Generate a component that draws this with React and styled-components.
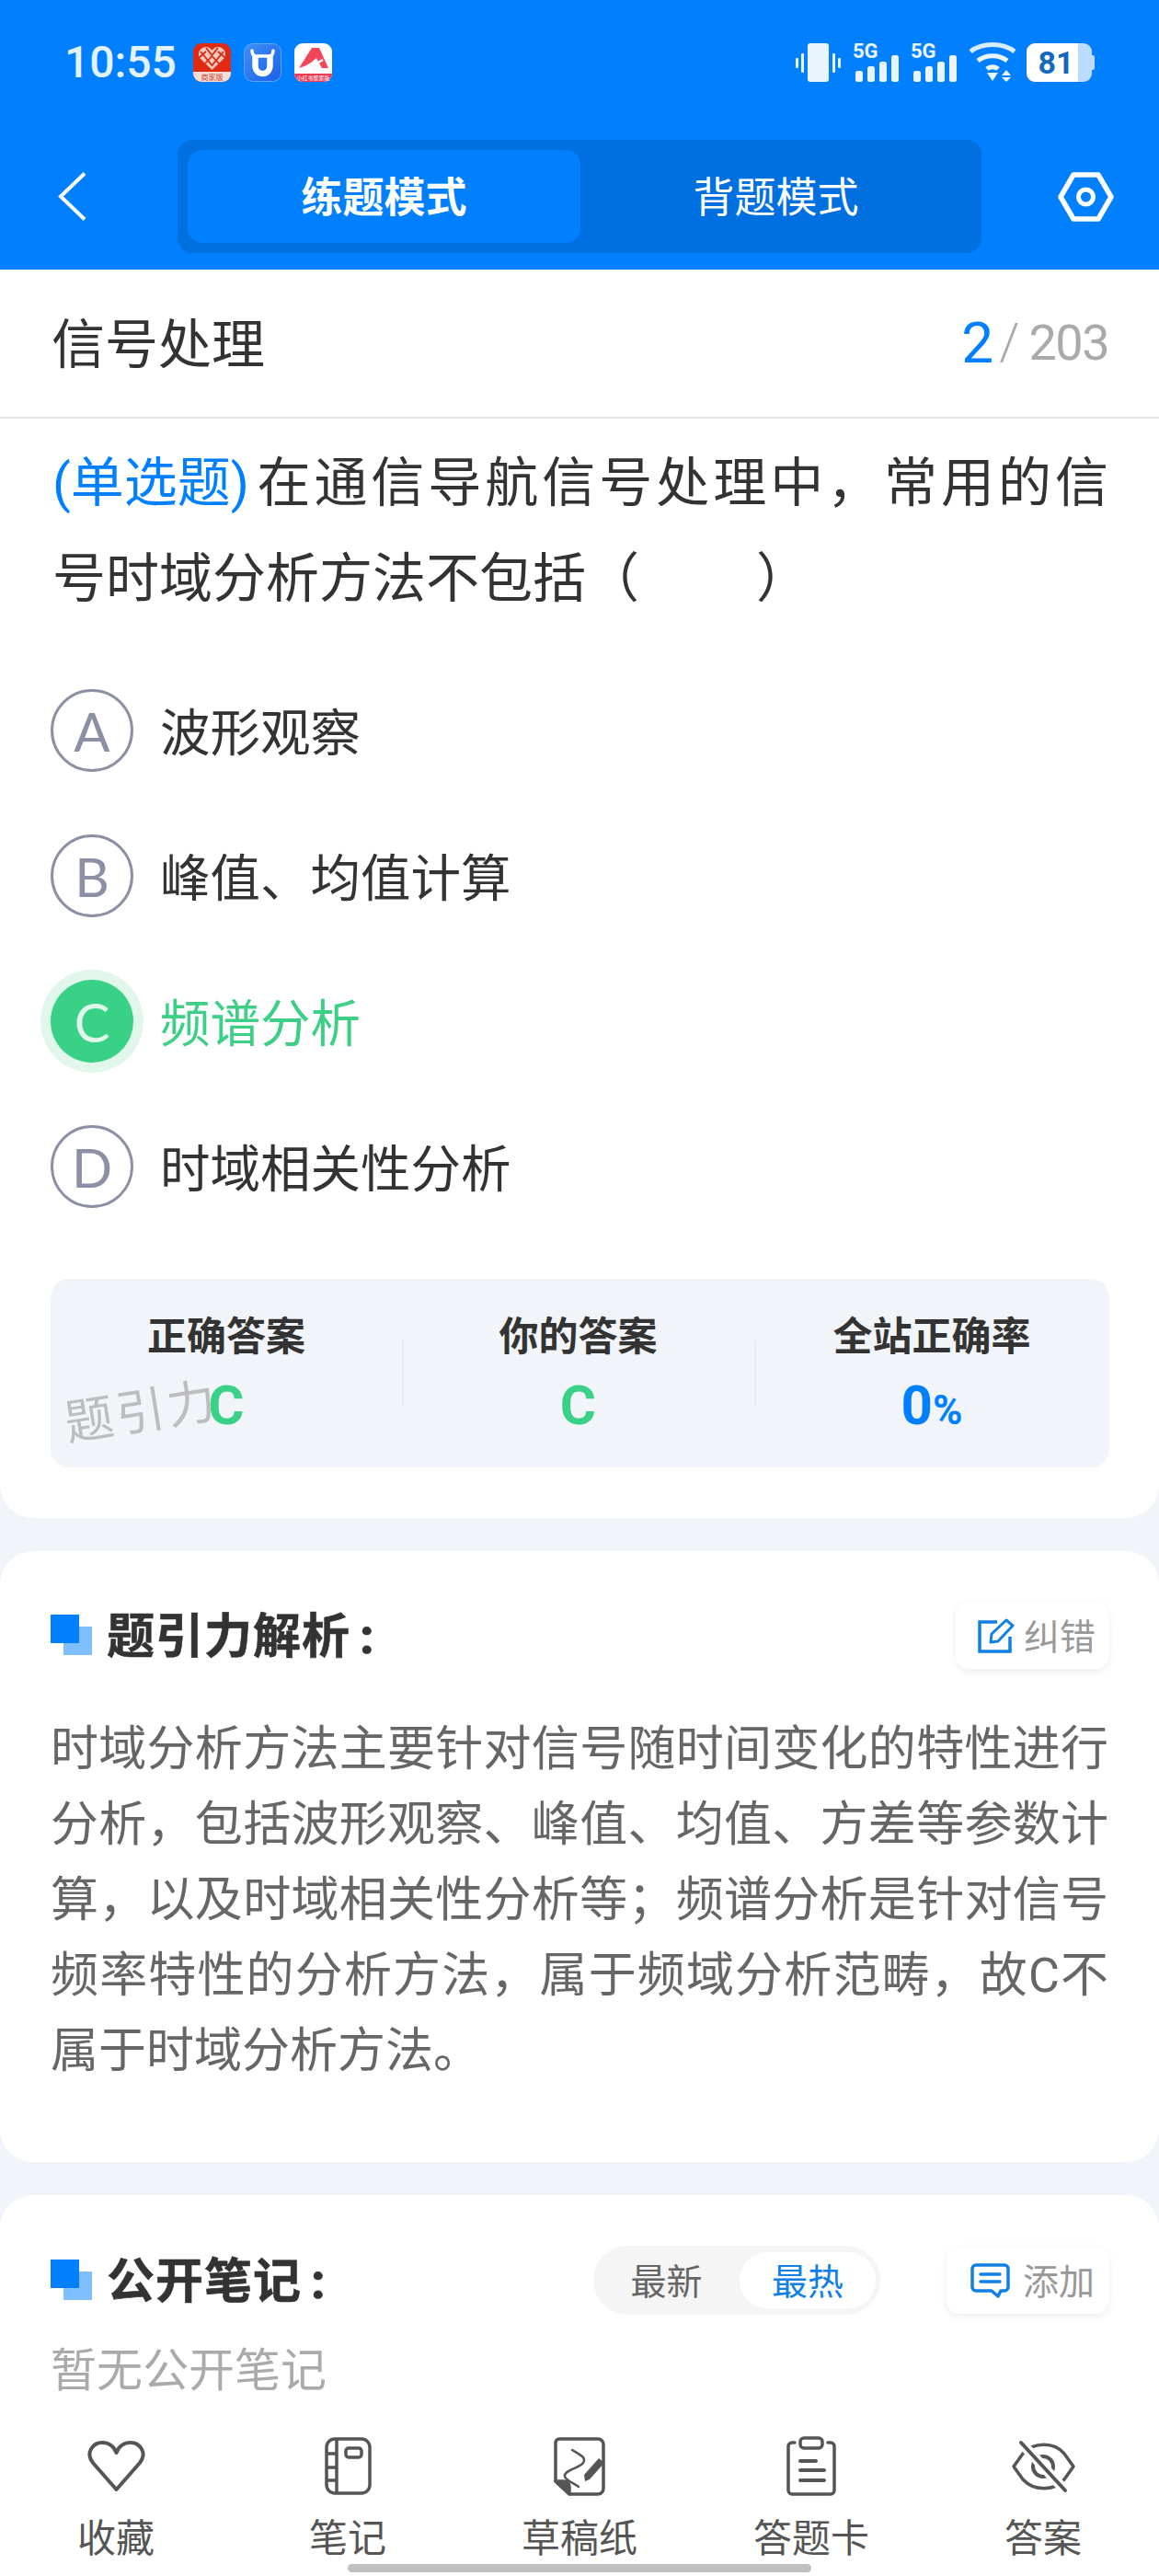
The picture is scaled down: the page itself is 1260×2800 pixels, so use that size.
import React from 'react'
import styled, { createGlobalStyle } from 'styled-components'

const GlobalStyle = createGlobalStyle`
  html, body {
    margin: 0;
    padding: 0;
    background: #F1F5F9;
  }
  * {
    box-sizing: border-box;
  }
  svg {
    overflow: visible;
  }
`

const FONT = `Roboto, "Noto Sans CJK SC", sans-serif`

function HeartLattice() {
  return (
    <svg width="41" height="42" viewBox="0 0 41 42">
      <rect width="41" height="42" rx="9" fill="#E02A12" />
      <path d="M0 31h41v2a9 9 0 0 1-9 9H9a9 9 0 0 1-9-9z" fill="#F8DCD6" />
      <path d="M20.5 29 L7 16 C3.500 9 9 4 14 4 C17 4 19.500 6 20.500 8 C21.500 6 24 4 27 4 C32 4 37.500 9 34 16 Z" fill="#F7C9BC" />
      <path d="M8 9 L20.500 24 L33 9 M14 5 L20.500 13 L27 5 M6 16 L14 9 M35 16 L27 9 M13 22 L20.500 14 L28 22" stroke="#D92A12" strokeWidth="1.800" fill="none" />
      <text x="20.500" y="39.500" fontSize="8" textAnchor="middle" fill="#C9402C" fontFamily={FONT}>商家版</text>
    </svg>
  )
}

function CowBadge() {
  return (
    <svg width="41" height="42" viewBox="0 0 41 42">
      <defs>
        <linearGradient id="cowFill" x1="0" y1="0" x2="1" y2="1">
          <stop offset="0" stopColor="#3F8FF8" />
          <stop offset="1" stopColor="#1C5FE6" />
        </linearGradient>
      </defs>
      <rect x="0.500" y="0.500" width="40" height="41" rx="9" fill="url(#cowFill)" stroke="#5DA6FF" />
      <path d="M9 8 C9 12 11 14 14 14 H27 C30 14 32 12 32 8" stroke="#fff" strokeWidth="3.500" fill="none" strokeLinecap="round" />
      <path d="M12.500 14 V24 C12.500 36 28.500 36 28.500 24 V14" stroke="#fff" strokeWidth="6.500" fill="none" />
    </svg>
  )
}

function RedA() {
  return (
    <svg width="41" height="42" viewBox="0 0 41 42">
      <rect width="41" height="42" rx="9" fill="#fff" />
      <path d="M0 33h41v0a9 9 0 0 1-9 9H9a9 9 0 0 1-9-9z" fill="#EE3A55" />
      <path d="M5 27 L19 5 H27 L37 27 L30 27 L24 16 Q16 24 5 27Z" fill="#F2455C" />
      <path d="M13 27 Q22 24 31 18" stroke="#fff" strokeWidth="2.500" fill="none" />
      <text x="20.500" y="40" fontSize="6" textAnchor="middle" fill="#fff" fontFamily={FONT}>小红书聚家版</text>
    </svg>
  )
}

function Vibrate() {
  return (
    <svg width="49" height="42" viewBox="0 0 49 42" fill="#EAF4FF">
      <rect x="13" y="0" width="23" height="42" rx="3" />
      <rect x="0" y="16" width="3" height="11" rx="1" />
      <rect x="6" y="11" width="3" height="21" rx="1" />
      <rect x="40" y="11" width="3" height="21" rx="1" />
      <rect x="46" y="16" width="3" height="11" rx="1" />
    </svg>
  )
}

function Signal() {
  return (
    <svg width="50" height="42" viewBox="0 0 50 42" fill="#EAF4FF">
      <text x="0" y="16" fontSize="22" fontWeight="700" fontFamily={FONT}>5G</text>
      <rect x="3" y="30" width="8" height="12" rx="2.500" />
      <rect x="16" y="25" width="8" height="17" rx="2.500" />
      <rect x="29" y="20" width="8" height="22" rx="2.500" />
      <rect x="42" y="13" width="8" height="29" rx="2.500" />
    </svg>
  )
}

function Wifi() {
  return (
    <svg width="52" height="42" viewBox="0 0 52 42">
      <path d="M2 9 C15 -1 37 -1 50 9" stroke="#D8ECFF" strokeWidth="5" fill="none" />
      <path d="M10 19 C19 12 33 12 42 19" stroke="#EAF4FF" strokeWidth="5" fill="none" />
      <path d="M20 28 C23 25 29 25 32 28" stroke="#EAF4FF" strokeWidth="5" fill="none" />
      <path d="M20 32 H32 L26 41Z M41 29 L46 35 H36Z" fill="#EAF4FF" />
      <path d="M36 37 H46 L41 42Z" fill="#EAF4FF" />
    </svg>
  )
}

function Chevron() {
  return (
    <svg width="29" height="53" viewBox="0 0 29 53">
      <path d="M28 1.500 L2 26.500 L28 51.500" stroke="#fff" strokeWidth="4" fill="none" />
    </svg>
  )
}

function HexNut() {
  return (
    <svg width="61" height="54" viewBox="0 0 61 54">
      <path d="M17 3 H44 L58 27 L44 51 H17 L3 27Z" stroke="#fff" strokeWidth="5.500" fill="none" strokeLinejoin="round" />
      <circle cx="30.500" cy="27" r="8" stroke="#fff" strokeWidth="5" fill="none" />
    </svg>
  )
}

function EditIcon() {
  return (
    <svg width="40" height="40" viewBox="0 0 40 40" fill="none" stroke="#1080E4" strokeWidth="3.500">
      <path d="M21 5 H2 V37 H35 V21" />
      <path d="M14 27 L15 18 L31 3 L38 9 L22 26Z" strokeWidth="3" strokeLinejoin="round" />
    </svg>
  )
}

function CommentIcon() {
  return (
    <svg width="43" height="38" viewBox="0 0 43 38" fill="none" stroke="#1080E4" strokeWidth="3.500">
      <path d="M6 2 H37 A4 4 0 0 1 41 6 V26 A4 4 0 0 1 37 30 H33 L30 36 L23 30 H6 A4 4 0 0 1 2 26 V6 A4 4 0 0 1 6 2Z" strokeLinejoin="round" />
      <path d="M11 12 H32 M11 20 H32" strokeLinecap="round" />
    </svg>
  )
}

function HeartIcon() {
  return (
    <svg width="63" height="56" viewBox="0 0 63 56" fill="none" stroke="#555" strokeWidth="4">
      <path d="M31.500 53 L6 24 C-3 12 7 2 16 2 C23 2 29 6 31.500 13 C34 6 40 2 47 2 C56 2 66 12 57 24 Z" strokeLinejoin="round" />
    </svg>
  )
}

function NotebookIcon() {
  return (
    <svg width="51" height="63" viewBox="0 0 51 63" fill="none" stroke="#555" strokeWidth="3.500">
      <rect x="2" y="2" width="47" height="59" rx="9" />
      <path d="M13 2 V61 M2 18 H13 M2 33 H13 M2 47 H13" />
      <rect x="23" y="12" width="17" height="10" rx="3" />
    </svg>
  )
}

function DraftIcon() {
  return (
    <svg width="56" height="64" viewBox="0 0 56 64" fill="none" stroke="#555" strokeWidth="3.500">
      <path d="M17 62 H48 A6 6 0 0 0 54 56 V8 A6 6 0 0 0 48 2 H6 A4 4 0 0 0 2 6 V48 Z" strokeLinejoin="round" />
      <path d="M2 48 H11 A6 6 0 0 1 17 54 V62 Z" fill="#555" strokeLinejoin="round" />
      <path d="M20 14 C28 19 36 22 32 28 C28 34 10 36 12 43 C14 48 22 50 27 54" strokeWidth="2.500" strokeLinecap="round" />
      <path d="M34 48 L33 41 L49 23 L55 28 L39 46Z" fill="#555" stroke="none" />
    </svg>
  )
}

function ClipboardIcon() {
  return (
    <svg width="54" height="65" viewBox="0 0 54 65" fill="none" stroke="#555" strokeWidth="3.500">
      <path d="M9 7 H6 A4 4 0 0 0 2 11 V59 A4 4 0 0 0 6 63 H48 A4 4 0 0 0 52 59 V11 A4 4 0 0 0 48 7 H45" strokeLinecap="round" />
      <rect x="15" y="2" width="24" height="11" rx="4" />
      <path d="M15 27 H32 M15 37 H41 M15 48 H41" strokeWidth="4" strokeLinecap="round" />
    </svg>
  )
}

function EyeOffIcon() {
  return (
    <svg width="69" height="56" viewBox="0 0 69 56" fill="none" stroke="#555" strokeWidth="3.500">
      <path d="M2 28 L12 14 C24 1 46 1 57 14 L67 28 L57 42 C46 55 24 55 12 42Z" strokeLinejoin="round" />
      <circle cx="34" cy="28" r="11" strokeWidth="4" />
      <path d="M10 2 L58 54" stroke="#fff" strokeWidth="11" />
      <path d="M10 2 L58 54" strokeWidth="4" strokeLinecap="round" />
    </svg>
  )
}

const options = [
  { letter: 'A', text: '波形观察' },
  { letter: 'B', text: '峰值、均值计算' },
  { letter: 'C', text: '频谱分析', correct: true },
  { letter: 'D', text: '时域相关性分析' },
]

const tabs = [
  { label: '收藏', icon: <HeartIcon /> },
  { label: '笔记', icon: <NotebookIcon /> },
  { label: '草稿纸', icon: <DraftIcon /> },
  { label: '答题卡', icon: <ClipboardIcon /> },
  { label: '答案', icon: <EyeOffIcon /> },
]

function App() {
  return (
    <Page>
      <GlobalStyle />
      <Header>
        <StatusBar>
          <StatusLeft>
            <Clock>10:55</Clock>
            <AppIcons>
              <HeartLattice />
              <CowBadge />
              <RedA />
            </AppIcons>
          </StatusLeft>
          <StatusRight>
            <Vibrate />
            <Signal />
            <Signal />
            <Wifi />
            <Battery>
              <BatteryLevel>81</BatteryLevel>
            </Battery>
          </StatusRight>
        </StatusBar>
        <NavBar>
          <Chevron />
          <ModeSwitch>
            <ModeTab $active>练题模式</ModeTab>
            <ModeTab>背题模式</ModeTab>
          </ModeSwitch>
          <NavRight>
            <HexNut />
          </NavRight>
        </NavBar>
      </Header>

      <Scroll>
        <QuestionCard>
          <SubjectRow>
            <SubjectName>信号处理</SubjectName>
            <Progress>
              <ProgressNow>2</ProgressNow>
              <ProgressTotal>/</ProgressTotal>
              <ProgressCount>203</ProgressCount>
            </Progress>
          </SubjectRow>
          <QuestionText>
            <QuestionLine $fill>
              <QuestionType>(单选题)</QuestionType> 在通信导航信号处理中，常用的信
            </QuestionLine>
            <QuestionLine>号时域分析方法不包括（&nbsp;&nbsp;&nbsp;&nbsp;&nbsp;&nbsp;&nbsp;&nbsp;&thinsp;）</QuestionLine>
          </QuestionText>
          <OptionList>
            {options.map((o) => (
              <OptionRow key={o.letter}>
                <OptionCircle $correct={o.correct}>{o.letter}</OptionCircle>
                <OptionText $correct={o.correct}>{o.text}</OptionText>
              </OptionRow>
            ))}
          </OptionList>
          <StatsBox>
            <StatColumn>
              <StatTitle>正确答案</StatTitle>
              <StatValue>C</StatValue>
            </StatColumn>
            <StatColumn>
              <StatTitle>你的答案</StatTitle>
              <StatValue>C</StatValue>
            </StatColumn>
            <StatColumn>
              <StatTitle>全站正确率</StatTitle>
              <StatValue $blue>
                0<Percent>%</Percent>
              </StatValue>
            </StatColumn>
            <Watermark>题引力</Watermark>
          </StatsBox>
        </QuestionCard>

        <Card>
          <SectionHeader>
            <SectionTitle>
              <TitleMark />
              <span>题引力解析<TitleColon>:</TitleColon></span>
            </SectionTitle>
            <ChipButton>
              <EditIcon />
              <ChipLabel>纠错</ChipLabel>
            </ChipButton>
          </SectionHeader>
          <AnalysisText>
            时域分析方法主要针对信号随时间变化的特性进行分析，包括波形观察、峰值、均值、方差等参数计算，以及时域相关性分析等；频谱分析是针对信号频率特性的分析方法，属于频域分析范畴，故C不属于时域分析方法。
          </AnalysisText>
        </Card>

        <NotesCard>
          <SectionHeader>
            <SectionTitle>
              <TitleMark />
              <span>公开笔记<TitleColon>:</TitleColon></span>
            </SectionTitle>
            <NotesTools>
              <SortSwitch>
                <SortItem>最新</SortItem>
                <SortItem $active>最热</SortItem>
              </SortSwitch>
              <ChipButton $wide>
                <CommentIcon />
                <ChipLabel>添加</ChipLabel>
              </ChipButton>
            </NotesTools>
          </SectionHeader>
          <EmptyNotes>暂无公开笔记</EmptyNotes>
        </NotesCard>
      </Scroll>

      <TabBar>
        {tabs.map((t) => (
          <TabItem key={t.label}>
            <TabIcon>{t.icon}</TabIcon>
            <TabLabel>{t.label}</TabLabel>
          </TabItem>
        ))}
        <HomeIndicator />
      </TabBar>
    </Page>
  )
}

export default App

const Page = styled.div`
  width: 1260px;
  height: 2800px;
  display: flex;
  flex-direction: column;
  overflow: hidden;
  background: #F1F5F9;
  font-family: ${FONT};
`

const Header = styled.div`
  height: 293px;
  background: #0080FF;
  flex-shrink: 0;
`

const StatusBar = styled.div`
  height: 152px;
  padding: 47px 73px 0 70px;
  display: flex;
  justify-content: space-between;
  align-items: flex-start;
`

const StatusLeft = styled.div`
  display: flex;
  align-items: center;
  height: 42px;
`

const Clock = styled.div`
  font-size: 48px;
  font-weight: 500;
  color: #E4F2FF;
  line-height: 42px;
  width: 140px;
`

const AppIcons = styled.div`
  display: flex;
  gap: 14px;
`

const StatusRight = styled.div`
  display: flex;
  align-items: center;
  gap: 13px;
  height: 42px;
`

const Battery = styled.div`
  position: relative;
  width: 71px;
  height: 42px;
  margin-left: -2px;
  border-radius: 9px;
  background: linear-gradient(to right, #fff 0 56px, #BBDCFF 56px);

  &::after {
    content: '';
    position: absolute;
    right: -3px;
    top: 13px;
    width: 3px;
    height: 16px;
    border-radius: 0 2px 2px 0;
    background: #BBDCFF;
  }
`

const BatteryLevel = styled.span`
  display: block;
  width: 56px;
  text-align: center;
  padding-left: 8px;
  font-size: 34px;
  font-weight: 700;
  line-height: 42px;
  color: #1668BE;
`

const NavBar = styled.div`
  height: 123px;
  padding-left: 64px;
  padding-right: 49px;
  display: flex;
  align-items: center;
`

const ModeSwitch = styled.div`
  width: 874px;
  height: 123px;
  margin-left: 100px;
  padding: 11px;
  display: grid;
  grid-template-columns: 427px 1fr;
  background: #0070E0;
  border-radius: 16px;
`

const ModeTab = styled.div`
  display: flex;
  align-items: center;
  justify-content: center;
  padding-bottom: 5px;
  border-radius: 16px;
  font-size: 45px;
  color: #fff;
  font-weight: ${(p) => (p.$active ? 700 : 400)};
  background: ${(p) => (p.$active ? '#0080FF' : 'transparent')};
`

const NavRight = styled.div`
  margin-left: auto;
  display: flex;
`

const Scroll = styled.div`
  flex: 1;
  min-height: 0;
  overflow: hidden;
  display: flex;
  flex-direction: column;
  gap: 36px;
`

const Card = styled.section`
  background: #fff;
  border-radius: 36px;
  padding: 55px 55px 79px 55px;
  flex-shrink: 0;
`

const QuestionCard = styled.section`
  background: #fff;
  border-radius: 0 0 36px 36px;
  padding-bottom: 55px;
  flex-shrink: 0;
`

const SubjectRow = styled.div`
  height: 162px;
  padding: 0 55px 0 56px;
  display: flex;
  align-items: center;
  justify-content: space-between;
  border-bottom: 2px solid #E4E4E4;
`

const SubjectName = styled.div`
  font-size: 58px;
  color: #333;
  padding-bottom: 6px;
`

const Progress = styled.div`
  display: flex;
  align-items: center;
  padding-bottom: 2px;
`

const ProgressNow = styled.span`
  font-size: 62px;
  color: #0080FF;
`

const ProgressTotal = styled.span`
  font-size: 56px;
  color: #AAA;
  font-weight: 300;
  margin: 0 10px 0 6px;
`

const ProgressCount = styled.span`
  font-size: 54px;
  letter-spacing: -1.500px;
  color: #AAA;
`

const QuestionText = styled.div`
  margin-top: 18px;
  padding: 0 55px 0 57px;
  font-size: 58px;
  line-height: 104px;
  color: #333;
`

const QuestionLine = styled.div`
  text-align: ${(p) => (p.$fill ? 'justify' : 'left')};
  text-align-last: ${(p) => (p.$fill ? 'justify' : 'left')};
  white-space: nowrap;
`

const QuestionType = styled.span`
  display: inline-block;
  margin-right: -10px;
  color: #0080FF;
`

const OptionList = styled.div`
  margin-top: 34px;
  padding: 0 55px;
  display: flex;
  flex-direction: column;
`

const OptionRow = styled.div`
  height: 158px;
  display: flex;
  align-items: center;
  gap: 29px;
`

const OptionCircle = styled.div`
  width: 90px;
  height: 90px;
  border-radius: 50%;
  display: flex;
  align-items: center;
  justify-content: center;
  font-family: Lato, sans-serif;
  font-size: 58px;
  font-weight: 400;
  color: ${(p) => (p.$correct ? '#DFF7EA' : '#8C90A4')};
  border: ${(p) => (p.$correct ? 'none' : '3px solid #8C90A4')};
  background: ${(p) => (p.$correct ? '#38D186' : 'transparent')};
  box-shadow: ${(p) => (p.$correct ? '0 0 0 11px #E1F7EC' : 'none')};
`

const OptionText = styled.div`
  font-size: 54.500px;
  padding-bottom: 4px;
  color: ${(p) => (p.$correct ? '#3CCF85' : '#333')};
`

const StatsBox = styled.div`
  position: relative;
  margin: 43px 54px 0 55px;
  height: 205px;
  padding-top: 33px;
  background: #F1F5F9;
  border-radius: 20px;
  display: grid;
  grid-template-columns: 382px 383px 1fr;
`

const StatColumn = styled.div`
  display: flex;
  flex-direction: column;
  align-items: center;
  position: relative;

  & + &::before {
    content: '';
    position: absolute;
    left: 0;
    top: 34px;
    width: 2px;
    height: 71px;
    background: #E8EBEE;
  }
`

const StatTitle = styled.div`
  font-size: 43px;
  font-weight: 700;
  line-height: 60px;
  color: #333;
`

const StatValue = styled.div`
  font-size: 60px;
  font-weight: 700;
  line-height: 90px;
  color: ${(p) => (p.$blue ? '#0080FF' : '#38D186')};
`

const Percent = styled.span`
  font-size: 44px;
`

const Watermark = styled.div`
  position: absolute;
  left: 15px;
  top: 115px;
  font-size: 53px;
  line-height: 60px;
  letter-spacing: 3px;
  color: #BDBDBD;
  transform: rotate(-9deg);
`

const SectionHeader = styled.div`
  display: flex;
  align-items: center;
  justify-content: space-between;
`

const SectionTitle = styled.h2`
  margin: 0;
  display: flex;
  align-items: center;
  gap: 17px;
  padding-bottom: 2px;
  font-size: 52px;
  font-weight: 700;
  letter-spacing: 1px;
  color: #333;
  -webkit-text-stroke: 0.6px #333;

  span {
    margin-top: -4px;
    margin-left: -1px;
  }
`

const TitleColon = styled.b`
  margin-left: 10px;
`

const TitleMark = styled.i`
  position: relative;
  width: 45px;
  height: 44px;
  background: linear-gradient(#80BFFF, #80BFFF) right bottom / 31px 31px no-repeat;

  &::before {
    content: '';
    position: absolute;
    left: 0;
    top: 0;
    width: 31px;
    height: 31px;
    background: #0080FF;
  }
`

const ChipButton = styled.div`
  width: ${(p) => (p.$wide ? '176px' : '166px')};
  height: 73px;
  padding-left: ${(p) => (p.$wide ? '26px' : '24px')};
  display: flex;
  align-items: center;
  gap: ${(p) => (p.$wide ? '14px' : '10px')};
  background: #fff;
  border-radius: 14px;
  box-shadow: 0 3px 10px rgba(0, 0, 0, 0.07);
  font-size: 39px;
  color: #999;
`

const ChipLabel = styled.span`
  margin-top: -4px;
`

const AnalysisText = styled.p`
  margin: 47px 0 0;
  font-size: 52px;
  line-height: 82px;
  color: #666;
  text-align: justify;
`

const NotesCard = styled(Card)`
  padding-bottom: 0;
  flex: 1;
  border-radius: 36px 36px 0 0;
`

const NotesTools = styled.div`
  display: flex;
  align-items: center;
  gap: 72px;
`

const SortSwitch = styled.div`
  width: 312px;
  height: 75px;
  padding: 7px 5px 7px 0;
  display: grid;
  grid-template-columns: 159px 1fr;
  border-radius: 38px;
  background: #F5F5F5;
`

const SortItem = styled.div`
  display: flex;
  align-items: center;
  justify-content: center;
  padding-bottom: 4px;
  border-radius: 30px;
  font-size: 39px;
  color: ${(p) => (p.$active ? '#1080E4' : '#666')};
  background: ${(p) => (p.$active ? '#fff' : 'transparent')};
`

const EmptyNotes = styled.div`
  margin-top: 31px;
  font-size: 50px;
  line-height: 60px;
  color: #AAA;
`

const TabBar = styled.nav`
  position: relative;
  height: 180px;
  flex-shrink: 0;
  background: #fff;
  display: grid;
  grid-template-columns: repeat(5, 1fr);
`

const TabItem = styled.div`
  display: flex;
  flex-direction: column;
  align-items: center;
`

const TabIcon = styled.div`
  height: 65px;
  margin-top: 28px;
  display: flex;
  align-items: center;
  justify-content: center;
`

const TabLabel = styled.div`
  margin-top: 22px;
  font-size: 42px;
  line-height: 50px;
  color: #555;
`

const HomeIndicator = styled.div`
  position: absolute;
  left: 378px;
  bottom: 4px;
  width: 504px;
  height: 9px;
  border-radius: 5px;
  background: #C0C0C0;
`
